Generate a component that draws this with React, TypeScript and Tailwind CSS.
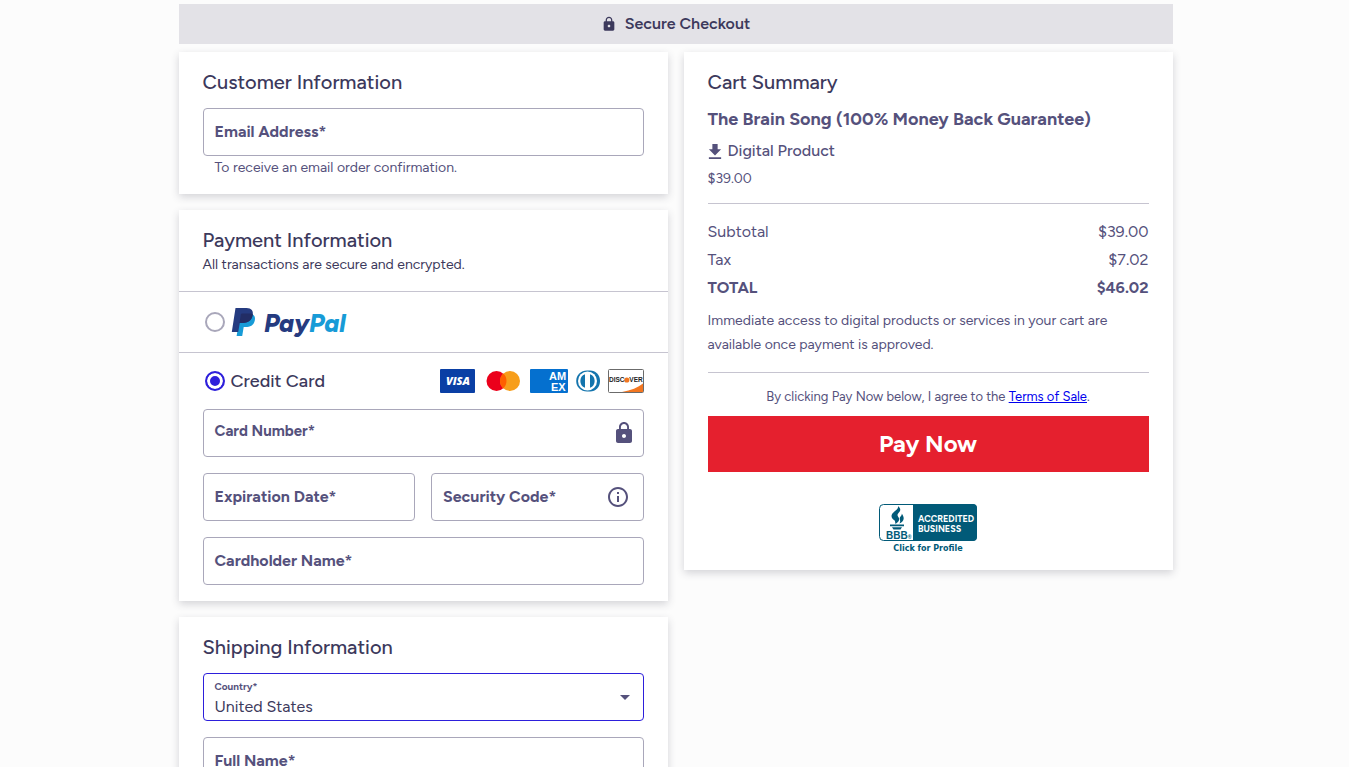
/**
 * Checkout page: customer, payment and shipping forms next to the cart summary
 */
import type { ReactNode } from "react"
import clsx from "clsx"
import { MdArrowDropDown, MdInfoOutline, MdLock } from "react-icons/md"

interface CardProps {
  children: ReactNode
}

function Card({ children }: CardProps) {
  return (
    <section className="bg-white shadow-[0_3px_8px_rgba(50,50,70,0.2)]">
      {children}
    </section>
  )
}

function CardTitle({ children }: CardProps) {
  return (
    <h2 className="text-xl leading-7 font-medium text-[#3c395c]">{children}</h2>
  )
}

interface FieldProps {
  id: string
  label: string
  type?: string
  icon?: ReactNode
  compact?: boolean
}

function Field({ id, label, type = "text", icon, compact }: FieldProps) {
  return (
    <div className="relative">
      <input
        id={id}
        type={type}
        className="block h-12 w-full rounded-sm border border-[#a9a7ba] bg-white px-[11px] text-base text-[#3c395c] outline-none focus:border-[#2d1fdb]"
      />
      <label
        htmlFor={id}
        className={clsx(
          "absolute inset-y-0 left-3 flex items-center font-bold text-[#55517c]",
          compact ? "pb-1 text-[15px]" : "text-base"
        )}
      >
        {label}*
      </label>
      {icon && (
        <span className="pointer-events-none absolute inset-y-0 right-2 flex items-center text-2xl text-[#55517c]">
          {icon}
        </span>
      )}
    </div>
  )
}

function PayPalLogo() {
  return (
    <svg width="116" height="30" viewBox="0 0 116 30" role="img" aria-label="PayPal">
      <path
        d="M9.5 6.5H20c3.500 1.200 4.600 3.900 3.800 7-1.200 5-4.500 6.600-9.500 6.600h-1.600L11.200 29H5.600z"
        fill="#179bd7"
      />
      <path
        d="M4.500 1H15.500c5 0 7.100 2.900 6.200 7.300-1.100 5.400-4.500 7.600-9.800 7.600H8.800L7.200 25H.8z"
        fill="#253b80"
      />
      <path
        d="M9.900 7.200C10 6.700 10.400 6.500 11 6.500h9c.7.200 1.300.4 1.800.8-1 6.100-4.500 8.600-9.900 8.600H8.500z"
        fill="#222d65"
      />
      <text
        x="33"
        y="25"
        fontSize="25"
        className="font-['Figtree','Inter'] font-extrabold italic"
      >
        <tspan fill="#253b80">Pay</tspan>
        <tspan fill="#179bd7">Pal</tspan>
      </text>
    </svg>
  )
}

function CardBrands() {
  return (
    <div className="flex items-center">
      <svg width="36" height="24" viewBox="0 0 36 24" role="img" aria-label="Visa">
        <rect width="35" height="24" rx="1" fill="#0a3fa5" />
        <text
          x="18"
          y="16"
          fontSize="11"
          textAnchor="middle"
          fill="#fff"
          className="font-['Open_Sans'] font-extrabold italic"
        >
          VISA
        </text>
      </svg>
      <svg
        className="ml-[10px]"
        width="36"
        height="24"
        viewBox="0 0 36 24"
        role="img"
        aria-label="Mastercard"
      >
        <circle cx="10.500" cy="12" r="10" fill="#eb001b" />
        <circle cx="24" cy="12" r="10" fill="#f79e1b" />
        <path
          d="M17.250 4.620a10 10 0 0 1 0 14.760a10 10 0 0 1 0-14.760z"
          fill="#ff5f00"
        />
      </svg>
      <svg
        className="ml-2"
        width="38"
        height="24"
        viewBox="0 0 38 24"
        role="img"
        aria-label="American Express"
      >
        <rect width="38" height="24" rx="1" fill="#0570cf" />
        <text
          fontSize="11"
          fill="#fff"
          className="font-['Liberation_Sans'] font-bold"
        >
          <tspan x="19" y="11">
            AM
          </tspan>
          <tspan x="21" y="22">
            EX
          </tspan>
        </text>
      </svg>
      <svg
        className="ml-2"
        width="24"
        height="24"
        viewBox="0 0 24 24"
        role="img"
        aria-label="Diners Club"
      >
        <path
          d="M11 1.500h3C19.800 1.500 24 6 24 12s-4.200 10.500-10 10.500h-3C5 22.500.200 18 .200 12S5 1.500 11 1.500z"
          fill="#1374ad"
        />
        <circle cx="11.500" cy="12" r="9.500" fill="#fff" />
        <path
          d="M9 5.200a7.300 7.300 0 0 0 0 13.600zM14 5.200a7.300 7.300 0 0 1 0 13.600z"
          fill="#1374ad"
        />
      </svg>
      <svg
        className="ml-2"
        width="36"
        height="24"
        viewBox="0 0 36 24"
        role="img"
        aria-label="Discover"
      >
        <rect x="0.500" y="0.500" width="35" height="23" rx="1" fill="#fff" stroke="#6b6b6b" />
        <path d="M35 14.500c-5 4-12 7-21 8.500h21z" fill="#f27621" />
        <circle cx="18.800" cy="11" r="2.600" fill="#f27621" />
        <text
          y="13.300"
          fontSize="6.500"
          fill="#222"
          className="font-['Liberation_Sans'] font-bold"
        >
          <tspan x="1">DISC</tspan>
          <tspan x="21.300">VER</tspan>
        </text>
      </svg>
    </div>
  )
}

function BbbSeal() {
  return (
    <svg width="98" height="50" viewBox="0 0 98 50" role="img" aria-label="BBB Accredited Business">
      <rect x="0.500" y="0.500" width="97" height="36" rx="4" fill="#fff" stroke="#015a78" />
      <path d="M34 0h60a4 4 0 0 1 4 4v29a4 4 0 0 1-4 4H34z" fill="#015a78" />
      <path
        d="M19 2c1.200 3.500-5.200 5.400-6.300 9-.8 2.600 1.100 4.200 3.200 5.800l.6 3.200c3-2 4.500-3.900 3.200-6.400-1-1.800-2-2.800 0-4.900C21.800 6.800 22 4.500 19 2zM22.800 9.500c.4 2.300-2.300 3.200-2.100 5.100.2 1.800 1.200 2.600-.5 5 2.900-1.300 4.900-3.300 4.400-6-.2-1.400-1-2.500-1.800-4.100z"
        fill="#015a78"
      />
      <path d="M11 20.500h14v1.800H11zM13 23.300h10l-1.500 2.200h-7z" fill="#015a78" />
      <text
        x="7"
        y="35"
        fontSize="10"
        fill="#015a78"
        className="font-['Liberation_Sans'] font-bold"
      >
        BBB
        <tspan fontSize="5">®</tspan>
      </text>
      <text fontSize="9" fill="#fff" className="font-['Figtree','Inter'] font-bold">
        <tspan x="39" y="18">
          ACCREDITED
        </tspan>
        <tspan x="39" y="28">
          BUSINESS
        </tspan>
      </text>
      <text
        x="49"
        y="47"
        fontSize="8"
        textAnchor="middle"
        fill="#015a78"
        className="font-['DejaVu_Sans'] font-bold"
      >
        Click for Profile
      </text>
    </svg>
  )
}

const radioClass =
  "size-5 appearance-none rounded-full border-2 border-[#a9a7ba] bg-white checked:border-[#2d1fdb] checked:bg-[#2d1fdb] checked:shadow-[inset_0_0_0_3px_#fff]"

function CustomerInformation() {
  return (
    <Card>
      <div className="px-6 pt-4 pb-3.5">
        <CardTitle>Customer Information</CardTitle>
        <div className="mt-3">
          <Field id="email" label="Email Address" type="email" />
          <p className="pl-3 text-sm leading-6">
            To receive an email order confirmation.
          </p>
        </div>
      </div>
    </Card>
  )
}

function PaymentInformation() {
  return (
    <Card>
      <div className="border-b border-[#c6c4d0] px-6 pt-4 pb-[15px]">
        <CardTitle>Payment Information</CardTitle>
        <p className="text-sm leading-[22px] text-[#3c395c]">
          All transactions are secure and encrypted.
        </p>
      </div>

      {/* PayPal */}
      <div className="flex h-[61px] items-center gap-1.5 border-b border-[#c6c4d0] px-[26px]">
        <input id="paypal" type="radio" name="method" className={radioClass} />
        <label htmlFor="paypal">
          <PayPalLogo />
        </label>
      </div>

      {/* Credit card */}
      <div className="px-6 pb-4">
        <div className="flex h-14 items-center justify-between pl-0.5">
          <div className="flex items-center gap-1.5">
            <input
              id="credit-card"
              type="radio"
              name="method"
              defaultChecked
              className={radioClass}
            />
            <label
              htmlFor="credit-card"
              className="text-lg leading-7 font-medium text-[#3c395c]"
            >
              Credit Card
            </label>
          </div>
          <CardBrands />
        </div>
        <div className="flex flex-col gap-4">
          <Field id="card-number" label="Card Number" icon={<MdLock />} compact />
          <div className="grid grid-cols-2 gap-4">
            <Field id="expiration" label="Expiration Date" />
            <Field
              id="security-code"
              label="Security Code"
              icon={<MdInfoOutline className="mr-1.5" />}
            />
          </div>
          <Field id="cardholder" label="Cardholder Name" />
        </div>
      </div>
    </Card>
  )
}

function ShippingInformation() {
  return (
    <Card>
      <div className="px-6 py-4">
        <CardTitle>Shipping Information</CardTitle>
        <div className="mt-3 flex flex-col gap-4">
          <div className="relative">
            <select
              id="country"
              className="block h-12 w-full appearance-none rounded-sm border border-[#2d1fdb] bg-white px-[11px] pt-5 text-base text-[#3c395c] outline-none"
            >
              <option>United States</option>
              <option>Canada</option>
            </select>
            <label
              htmlFor="country"
              className="absolute top-1.5 left-3 text-[10px] leading-4 font-bold text-[#55517c]"
            >
              Country*
            </label>
            <MdArrowDropDown className="pointer-events-none absolute top-3 right-[7px] size-6" />
          </div>
          <Field id="full-name" label="Full Name" />
        </div>
      </div>
    </Card>
  )
}

function DownloadIcon() {
  return (
    <svg width="14" height="17" viewBox="4 2 16 19" fill="currentColor" aria-hidden="true">
      <path d="M19 9h-4V3H9v6H5l7 7 7-7zM5 18v2h14v-2H5z" />
    </svg>
  )
}

function CartSummary() {
  const totals = [
    { label: "Subtotal", value: "$39.00" },
    { label: "Tax", value: "$7.02" },
  ]

  return (
    <Card>
      <div className="px-6 py-4">
        <CardTitle>Cart Summary</CardTitle>
        <h3 className="mt-2 text-lg leading-[30px] font-bold">
          The Brain Song (100% Money Back Guarantee)
        </h3>
        <p className="mt-[5px] flex items-center gap-1.5 text-base leading-6 font-medium">
          <DownloadIcon />
          Digital Product
        </p>
        <p className="mt-1 text-sm leading-6">$39.00</p>

        <dl className="mt-3 border-t border-[#c6c4d0] pt-3.5 text-base leading-7">
          {totals.map(row => (
            <div key={row.label} className="flex justify-between">
              <dt>{row.label}</dt>
              <dd>{row.value}</dd>
            </div>
          ))}
          <div className="flex justify-between font-bold">
            <dt>TOTAL</dt>
            <dd>$46.02</dd>
          </div>
        </dl>

        <p className="mt-[7px] border-b border-[#c6c4d0] pb-[15px] text-sm leading-6">
          Immediate access to digital products or services in your cart are
          available once payment is approved.
        </p>

        <p className="mt-3 text-center text-[13px] leading-6">
          By clicking Pay Now below, I agree to the{" "}
          <a href="#terms" className="text-[#0000ee] underline">
            Terms of Sale
          </a>
          .
        </p>
        <button
          type="button"
          className="mt-[7px] h-14 w-full bg-[#e5202e] text-2xl font-bold text-white"
        >
          Pay Now
        </button>

        <a href="#bbb" className="mt-8 flex justify-center">
          <BbbSeal />
        </a>
      </div>
    </Card>
  )
}

export default function App() {
  return (
    <div className="min-h-screen bg-[#fcfcfc] pl-0.5 font-['Figtree','Inter',sans-serif] text-[#55517c]">
      <main className="mx-auto max-w-[994px] pt-1">
        <header className="flex h-10 items-center justify-center gap-2 bg-[#e3e2e7] text-base font-semibold text-[#3c395c]">
          <MdLock className="size-4" />
          <h1>Secure Checkout</h1>
        </header>
        <div className="mt-2 grid grid-cols-2 items-start gap-4">
          <div className="flex flex-col gap-4">
            <CustomerInformation />
            <PaymentInformation />
            <ShippingInformation />
          </div>
          <CartSummary />
        </div>
      </main>
    </div>
  )
}
